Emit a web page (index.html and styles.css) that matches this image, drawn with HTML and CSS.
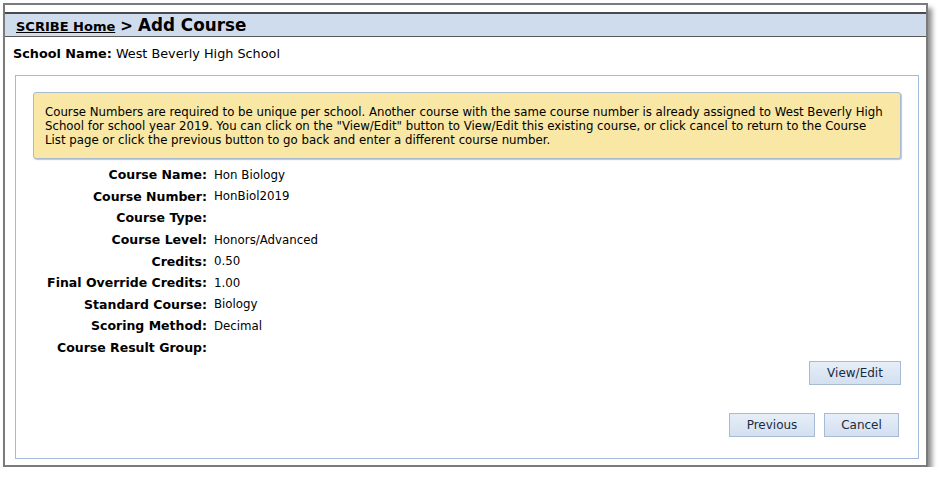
FILE: index.html
```html
<!DOCTYPE html>
<html>
<head>
<meta charset="utf-8">
<link rel="stylesheet" href="styles.css">
</head>
<body>
<div class="window">
  <div class="titlebar"><a class="home" href="#">SCRIBE Home</a> <span class="sep">&gt;</span> <span class="title">Add Course</span></div>
  <div class="school"><b>School Name:</b> West Beverly High School</div>
  <div class="panel">
    <div class="alert">Course Numbers are required to be unique per school. Another course with the same course number is already assigned to West Beverly High<br>School for school year 2019. You can click on the "View/Edit" button to View/Edit this existing course, or click cancel to return to the Course<br>List page or click the previous button to go back and enter a different course number.</div>
    <div class="fields">
      <div class="lbl">Course Name:</div><div class="val">Hon Biology</div>
      <div class="lbl">Course Number:</div><div class="val">HonBiol2019</div>
      <div class="lbl">Course Type:</div><div class="val"></div>
      <div class="lbl">Course Level:</div><div class="val">Honors/Advanced</div>
      <div class="lbl">Credits:</div><div class="val">0.50</div>
      <div class="lbl">Final Override Credits:</div><div class="val">1.00</div>
      <div class="lbl">Standard Course:</div><div class="val">Biology</div>
      <div class="lbl">Scoring Method:</div><div class="val">Decimal</div>
      <div class="lbl">Course Result Group:</div><div class="val"></div>
    </div>
    <div class="row-edit"><button class="btn btn-edit">View/Edit</button></div>
    <div class="row-nav"><button class="btn btn-prev">Previous</button><button class="btn btn-cancel">Cancel</button></div>
  </div>
</div>
</body>
</html>
```
FILE: styles.css
```css
html, body { margin: 0; padding: 0; background: #fff; }
body { font-family: "DejaVu Sans", Verdana, sans-serif; color: #000; }
.window {
  box-sizing: border-box;
  margin: 3px 0 0 3px;
  width: 925px;
  height: 464px;
  border: 2px solid #7b7b7b;
  box-shadow: 4px 5px 5px rgba(0,0,0,0.45);
  background: #fff;
  padding-top: 7px;
  display: flex;
  flex-direction: column;
}
.titlebar {
  height: 22px;
  line-height: 22px;
  background: #cfdcee;
  border-top: 2px solid #4a4a4a;
  border-bottom: 1px solid #5a5a5a;
  padding-left: 11px;
  white-space: nowrap;
}
.home { font-weight: bold; font-size: 13px; color: #000; text-decoration: underline; }
.sep { font-weight: bold; font-size: 15px; }
.title { font-weight: bold; font-size: 16.8px; }
.school { font-size: 12.8px; margin: 9px 0 0 8px; height: 16px; }
.panel {
  margin: 13px 7px 0 10px;
  border: 1px solid #a4badb;
  flex: 1;
  margin-bottom: 6px;
  padding: 16px 17px 0 17px;
  display: flex;
  flex-direction: column;
}
.alert {
  background: #f8e7a5;
  border: 1px solid #a9bbd3;
  border-radius: 3px;
  box-shadow: 1px 1px 1px rgba(120,140,170,0.5);
  font-size: 11.75px;
  line-height: 14px;
  padding: 12px 10px 11px 11px;
  white-space: nowrap;
}
.fields {
  display: grid;
  grid-template-columns: 174px auto;
  column-gap: 7px;
  grid-auto-rows: 21.6px;
  align-items: center;
  margin-top: 5px;
}
.lbl { font-weight: bold; font-size: 12.5px; text-align: right; }
.val { font-size: 11.8px; }
.row-edit { display: flex; justify-content: flex-end; margin-top: 3px; }
.row-nav { display: flex; justify-content: flex-end; margin-top: 28px; padding-right: 2px; gap: 9px; }
.btn {
  font-family: "DejaVu Sans", Verdana, sans-serif;
  font-size: 12px;
  height: 24px;
  border: 1px solid #a7bbd6;
  background: linear-gradient(#e6eef8, #d3e0f0);
  color: #1a2a40;
  padding: 0;
  border-radius: 0;
}
.btn-edit { width: 92px; }
.btn-prev { width: 86px; }
.btn-cancel { width: 75px; }
```
